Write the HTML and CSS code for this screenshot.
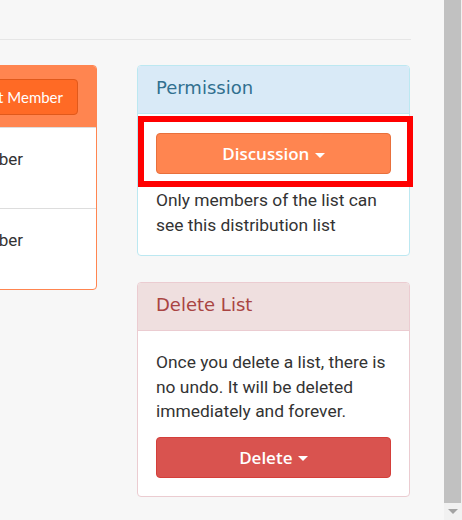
FILE: index.html
```html
<!DOCTYPE html>
<html lang="en">
<head>
  <meta charset="UTF-8">
  <title>Distribution List</title>
  <link rel="stylesheet" href="styles.css">
</head>
<body>
  <div class="window">
    <div class="content">
      <div class="topbar"></div>

      <div class="columns">
        <div class="members">
          <div class="members-head">
            <button class="btn btn-add">Edit Member</button>
          </div>
          <div class="member-row">Member</div>
          <div class="member-row">Member</div>
        </div>

        <div class="side">
          <div class="panel panel-info">
            <div class="panel-head">Permission</div>
            <div class="panel-body">
              <button class="btn btn-orange">Discussion <span class="caret"></span></button>
              <p>Only members of the list can see this distribution list</p>
            </div>
            <div class="highlight"></div>
          </div>

          <div class="panel panel-danger">
            <div class="panel-head">Delete List</div>
            <div class="panel-body">
              <p>Once you delete a list, there is no undo. It will be deleted immediately and forever.</p>
              <button class="btn btn-red">Delete <span class="caret"></span></button>
            </div>
          </div>
        </div>
      </div>
    </div>

    <div class="scrollbar">
      <div class="thumb"></div>
      <div class="arrow"></div>
    </div>
  </div>
</body>
</html>
```

FILE: styles.css
```css
body {
  margin: 0;
  background: #f7f7f7;
  font-family: Roboto, "Liberation Sans", sans-serif;
  color: #333;
}
.window {
  display: flex;
  height: 520px;
  overflow: hidden;
}
.content {
  flex: 1;
  overflow: hidden;
}
.topbar {
  height: 39px;
  width: 411px;
  border-bottom: 1px solid #e6e6e6;
}
.columns {
  display: flex;
  gap: 40px;
  margin-top: 25px;
}

/* left list, partly cut off */
.members {
  flex: none;
  box-sizing: border-box;
  width: 200px;
  margin-left: -103px;
  align-self: flex-start;
  background: #fff;
  border: 1px solid #ff8550;
  border-radius: 4px;
  overflow: hidden;
}
.members-head {
  background: #ff8550;
  height: 61px;
  display: flex;
  align-items: center;
  justify-content: flex-end;
  padding-right: 18px;
}
.member-row {
  height: 81px;
  box-sizing: border-box;
  padding: 19px 73px 0 0;
  text-align: right;
  font-size: 17px;
  line-height: 24px;
  border-top: 1px solid #ddd;
}
.member-row:first-of-type {
  height: 80px;
  border-top: 0;
}

.side {
  width: 273px;
  flex: none;
}
.panel {
  position: relative;
  background: #fff;
  border: 1px solid #ddd;
  border-radius: 4px;
  margin-bottom: 26px;
}
.panel-head {
  height: 48px;
  box-sizing: border-box;
  padding: 11px 18px 0;
  font-family: "DejaVu Sans", Verdana, sans-serif;
  font-size: 18px;
  line-height: 21px;
  border-bottom: 1px solid #ddd;
  border-radius: 3px 3px 0 0;
}
.panel-body {
  padding: 19px 18px 18px;
}
.panel-body p {
  margin: 0;
  font-size: 17.4px;
  line-height: 24.5px;
}
.panel-info {
  border-color: #bce8f1;
}
.panel-info .panel-head {
  background: #d9eaf7;
  color: #31708f;
  border-bottom-color: #bce8f1;
}
.panel-info .btn {
  margin-bottom: 14px;
}
.panel-danger {
  border-color: #ebccd1;
}
.panel-danger .panel-head {
  background: #efdfdf;
  color: #a94442;
  border-bottom-color: #ebccd1;
}
.panel-danger .btn {
  margin-top: 13px;
}

.btn {
  display: block;
  box-sizing: border-box;
  font-family: "Open Sans", Lato, sans-serif;
  font-weight: 600;
  font-size: 17px;
  color: #fff;
  border: 1px solid transparent;
  border-radius: 4px;
}
.btn-orange,
.btn-red {
  width: 100%;
  height: 41px;
}
.btn-orange {
  background: #ff8550;
  border-color: #e8703c;
}
.btn-red {
  background: #d9534f;
  border-color: #d43f3a;
}
.btn-add {
  height: 36px;
  padding: 0 14px;
  background: #ff6a25;
  border-color: #e0591b;
  font-family: Lato, sans-serif;
  font-weight: normal;
  font-size: 15px;
}
.caret {
  display: inline-block;
  width: 0;
  height: 0;
  margin-left: 1px;
  vertical-align: middle;
  border-top: 5px solid #fff;
  border-left: 5px solid transparent;
  border-right: 5px solid transparent;
}

/* red annotation frame over the permission button */
.highlight {
  position: absolute;
  left: 0;
  top: 50px;
  width: 275px;
  height: 71px;
  box-sizing: border-box;
  border: 6px solid #ff0000;
}

.scrollbar {
  width: 18px;
  flex: none;
  background: #f1f1f1;
  display: flex;
  flex-direction: column;
}
.thumb {
  height: 503px;
  margin-right: 1px;
  background: #c1c1c1;
}
.arrow {
  flex: 1;
  display: flex;
  align-items: center;
  justify-content: center;
}
.arrow::before {
  content: "";
  border-top: 5px solid #a3a3a3;
  border-left: 5px solid transparent;
  border-right: 5px solid transparent;
}
```
